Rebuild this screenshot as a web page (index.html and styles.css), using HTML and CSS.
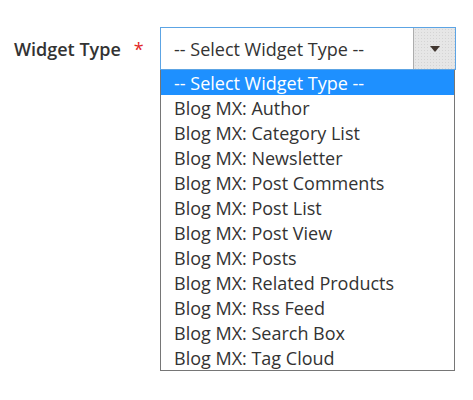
FILE: index.html
```
<!DOCTYPE html>
<html>
<head>
<meta charset="utf-8">
<link rel="stylesheet" href="styles.css">
</head>
<body>
<div class="field">
  <div class="label"><span class="label-text">Widget Type</span><span class="req">*</span></div>
  <div class="control">
    <div class="select">
      <div class="select-value">-- Select Widget Type --</div>
      <div class="select-btn"><svg width="10" height="6" viewBox="0 0 10 6"><path d="M0 0 H10 L5 6 Z" fill="#41362f"/></svg></div>
    </div>
    <ul class="list">
      <li class="opt active">-- Select Widget Type --</li>
      <li class="opt">Blog MX: Author</li>
      <li class="opt">Blog MX: Category List</li>
      <li class="opt">Blog MX: Newsletter</li>
      <li class="opt">Blog MX: Post Comments</li>
      <li class="opt">Blog MX: Post List</li>
      <li class="opt">Blog MX: Post View</li>
      <li class="opt">Blog MX: Posts</li>
      <li class="opt">Blog MX: Related Products</li>
      <li class="opt">Blog MX: Rss Feed</li>
      <li class="opt">Blog MX: Search Box</li>
      <li class="opt">Blog MX: Tag Cloud</li>
    </ul>
  </div>
</div>
</body>
</html>
```
FILE: styles.css
```
html, body {
  margin: 0;
  padding: 0;
  background: #fff;
  font-family: "Open Sans", "Noto Sans", sans-serif;
  color: #303030;
}
.field {
  display: flex;
  padding-top: 27px;
}
.label {
  width: 160px;
  box-sizing: border-box;
  padding-left: 14px;
  height: 43px;
  display: flex;
  align-items: center;
  font-size: 18px;
  font-weight: 600;
  color: #333;
}
.req {
  color: #e22626;
  margin-left: 13px;
  font-weight: 400;
}
.control {
  width: 296px;
}
.select {
  height: 43px;
  box-sizing: border-box;
  border: 1px solid #5ca4e4;
  display: flex;
}
.select-value {
  flex: 1;
  display: flex;
  align-items: center;
  padding-left: 13px;
  font-size: 18px;
  color: #333;
}
.select-btn {
  width: 41px;
  border-left: 1px solid #adadad;
  background-color: #e6e6e6;
  background-image: radial-gradient(#d4d4d4 0.6px, transparent 0.8px);
  background-size: 3px 3px;
  display: flex;
  align-items: center;
  justify-content: center;
}
.list {
  list-style: none;
  margin: 0;
  padding: 0;
  border: 1px solid #767676;
  border-top: 0;
  width: 295px;
  box-sizing: border-box;
}
.opt {
  height: 25px;
  line-height: 27px;
  overflow: hidden;
  padding-left: 13px;
  font-size: 18px;
  color: #333;
  white-space: nowrap;
}
.opt.active {
  background: #1e90ff;
  color: #fff;
}
```
